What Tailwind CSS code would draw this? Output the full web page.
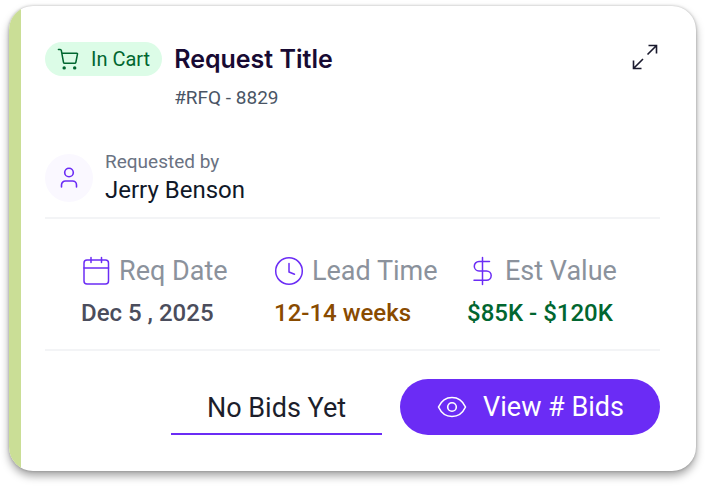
<!DOCTYPE html>
<html lang="en">
<head>
  <meta charset="UTF-8">
  <meta name="viewport" content="width=device-width, initial-scale=1.0">
  <title>Request Card</title>
  <script src="https://cdn.jsdelivr.net/npm/@tailwindcss/browser@4"></script>
</head>
<body class="bg-white font-['Roboto',sans-serif] pt-1.5 pb-4 px-[9px]">

  <!-- Request Card -->
  <article class="flex bg-white rounded-3xl overflow-hidden shadow-[0_5px_8px_rgba(0,0,0,0.35),0_0_3px_rgba(0,0,0,0.25)]">
    <div class="w-3 shrink-0 bg-[#cade96]"></div>

    <div class="flex-1 pl-6 pr-9 py-9">

      <!-- Header -->
      <header class="flex items-start">
        <span class="flex items-center gap-3 h-[34px] px-3 rounded-full bg-[#dcfce7] text-[#016630] text-xl">
          <svg class="w-[22px] h-[22px]" viewBox="0 0 23 23" fill="none" stroke="currentColor" stroke-width="1.6" stroke-linecap="round" stroke-linejoin="round">
            <path d="M1.500 1.500h1.800q1 0 1.200 1l2.300 12.500q.2 1 1.200 1h10.500q1 0 1.200-1l1.700-8.500q.2-1-.8-1H5"/>
            <circle cx="7.500" cy="20.800" r="1.800" fill="currentColor" stroke="none"/>
            <circle cx="18.500" cy="20.800" r="1.800" fill="currentColor" stroke="none"/>
          </svg>
          In Cart
        </span>
        <div class="ml-3">
          <h1 class="font-['Inter',sans-serif] text-[25px] leading-[34px] font-semibold text-[#180a33]">Request Title</h1>
          <p class="mt-2.5 text-[19px] leading-6 text-[#4a5565]">#RFQ - 8829</p>
        </div>
        <button type="button" aria-label="Expand" class="ml-auto mt-0.5 text-[#1a1a2e]">
          <svg class="w-[30px] h-[26px]" viewBox="0 0 30 26" fill="none" stroke="currentColor" stroke-width="1.600">
            <path d="M18.500 1.500h8v8M26 2l-8.500 8.500M3.500 16.500v8h8M4 24l9-9"/>
          </svg>
        </button>
      </header>

      <!-- Requester -->
      <div class="flex items-center gap-3 mt-10 pb-[11px] border-b-2 border-[#f3f4f6]">
        <span class="w-12 h-12 flex items-center justify-center rounded-full bg-[#faf8ff] text-[#6b2cf5]">
          <svg class="w-6 h-6" viewBox="0 0 24 24" fill="none" stroke="currentColor" stroke-width="1.600" stroke-linecap="round">
            <circle cx="12" cy="6.500" r="4.300"/>
            <path d="M4.500 21v-2a4 4 0 0 1 4-4h7a4 4 0 0 1 4 4v2"/>
          </svg>
        </span>
        <div>
          <p class="text-[19px] leading-6 text-[#6a7282]">Requested by</p>
          <p class="text-2xl leading-8 text-[#101828]">Jerry Benson</p>
        </div>
      </div>

      <!-- Stats -->
      <dl class="grid grid-cols-3 pl-9 pt-9 pb-5 border-b-2 border-[#f3f4f6] whitespace-nowrap">
        <div>
          <dt class="flex items-center gap-2 text-[27px] leading-8 text-[#8b929c]">
            <svg class="w-[30px] h-[30px] text-[#6b2cf5]" viewBox="0 0 30 30" fill="none" stroke="currentColor" stroke-width="1.500" stroke-linecap="round">
              <rect x="3" y="4" width="24.500" height="24" rx="3"/>
              <path d="M3 12h24.500M10 1.500v5M20.500 1.500v5"/>
            </svg>
            Req Date
          </dt>
          <dd class="mt-2.5 text-2xl leading-8 font-medium text-[#4b4d5c]">Dec 5 , 2025</dd>
        </div>
        <div>
          <dt class="flex items-center gap-2 text-[27px] leading-8 text-[#8b929c]">
            <svg class="w-[30px] h-[30px] text-[#6b2cf5]" viewBox="0 0 30 30" fill="none" stroke="currentColor" stroke-width="1.500" stroke-linecap="round" stroke-linejoin="round">
              <circle cx="15" cy="15" r="13.300"/>
              <path d="M15 7.500v8.500l5.500 2.300"/>
            </svg>
            Lead Time
          </dt>
          <dd class="mt-2.5 text-2xl leading-8 font-medium text-[#894b00]">12-14 weeks</dd>
        </div>
        <div>
          <dt class="flex items-center gap-2 text-[27px] leading-8 text-[#8b929c]">
            <svg class="w-[30px] h-[30px] text-[#6b2cf5]" viewBox="0 0 30 30" fill="none" stroke="currentColor" stroke-width="1.500" stroke-linecap="round">
              <path d="M15.500 1.500v27M22.500 5.500H12a4.700 4.700 0 0 0 0 9.400h7.500a4.700 4.700 0 0 1 0 9.400H7"/>
            </svg>
            Est Value
          </dt>
          <dd class="mt-2.5 text-2xl leading-8 font-medium text-[#016630]">$85K - $120K</dd>
        </div>
      </dl>

      <!-- Actions -->
      <div class="flex justify-end gap-[18px] mt-7 text-[27px] leading-8">
        <button type="button" class="h-14 px-9 pt-1 border-b-2 border-[#6b2cf5] text-[#1c1e2b]">No Bids Yet</button>
        <button type="button" class="flex items-center gap-4 h-14 px-9 rounded-full bg-[#6b2cf5] text-white">
          <svg class="w-[31px] h-[30px]" viewBox="0 0 31 30" fill="none" stroke="currentColor" stroke-width="1.600">
            <path d="M2.500 15C5.500 8.500 10.500 5.500 16 5.500S26.500 8.500 29.500 15C26.500 21.500 21.500 24.500 16 24.500S5.500 21.500 2.500 15z" stroke-linejoin="round"/>
            <circle cx="16" cy="15" r="4.300"/>
          </svg>
          View # Bids
        </button>
      </div>
    </div>
  </article>

</body>
</html>
